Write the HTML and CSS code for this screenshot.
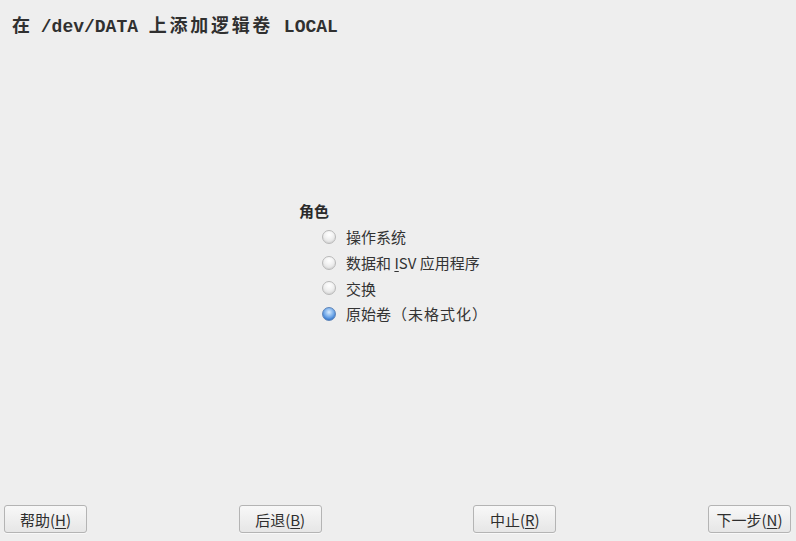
FILE: index.html
```html
<!DOCTYPE html>
<html lang="zh-CN">
<head>
<meta charset="utf-8">
<title>添加逻辑卷</title>
<link rel="stylesheet" href="styles.css">
</head>
<body>
<div class="window">
  <h1 class="title">在 /dev/DATA <span class="cjk">上添加逻辑卷</span> LOCAL</h1>
  <main class="content">
    <fieldset class="group">
      <legend class="group-label">角色</legend>
      <label class="option"><span class="radio"></span><span>操作系统</span></label>
      <label class="option"><span class="radio"></span><span>数据和 <u>I</u>SV 应用程序</span></label>
      <label class="option"><span class="radio"></span><span>交换</span></label>
      <label class="option"><span class="radio checked"></span><span>原始卷<span class="paren">（未格式化）</span></span></label>
    </fieldset>
  </main>
  <footer class="buttons">
    <button class="btn">帮助(<u>H</u>)</button>
    <button class="btn">后退(<u>B</u>)</button>
    <button class="btn">中止(<u>R</u>)</button>
    <button class="btn">下一步(<u>N</u>)</button>
  </footer>
</div>
</body>
</html>
```
FILE: styles.css
```css
html, body {
  margin: 0;
  padding: 0;
  background: #eeeeee;
}
.window {
  width: 796px;
  height: 541px;
  display: flex;
  flex-direction: column;
  font-family: "DejaVu Sans", "Noto Sans CJK SC", sans-serif;
  color: #2e2e2e;
}
.title {
  margin: 0;
  padding: 15px 12px 0 12px;
  height: 28px;
  font-family: "Liberation Mono", "Noto Sans CJK SC", monospace;
  font-size: 18px;
  font-weight: bold;
  line-height: 24px;
  color: #303030;
}
.title .cjk {
  letter-spacing: 2.7px;
}
.content {
  flex: 1;
  display: flex;
  justify-content: center;
  padding-top: 158px;
  padding-right: 8px;
}
.group {
  border: 0;
  margin: 0;
  padding: 0;
  width: 190px;
  display: flex;
  flex-direction: column;
}
.group-label {
  padding: 0;
  font-family: "Noto Sans CJK SC", sans-serif;
  font-weight: bold;
  font-size: 15px;
  line-height: 20px;
  margin-bottom: 3px;
  color: #2a2a2a;
}
.option {
  display: flex;
  align-items: center;
  height: 25.7px;
  padding-left: 23px;
  gap: 10px;
  font-family: "Noto Sans CJK SC", sans-serif;
  font-size: 15px;
  color: #333333;
}
.option .paren {
  margin-left: 1px;
  letter-spacing: 1px;
}
.option u {
  text-decoration-thickness: 1px;
  text-underline-offset: 2px;
}
.radio {
  width: 12px;
  height: 12px;
  border-radius: 50%;
  border: 1px solid #b9b9b9;
  background: radial-gradient(circle at 50% 30%, #ffffff 0%, #f2f2f2 40%, #d6d6d6 100%);
  box-shadow: inset 0 -1px 1px rgba(0,0,0,0.05);
  flex: none;
}
.radio.checked {
  border-color: #5d84b8;
  background: radial-gradient(circle at 50% 35%, #d9ebfd 0%, #8fbdf0 35%, #3f83d8 75%, #2d66b3 100%);
}
.buttons {
  display: flex;
  justify-content: space-between;
  padding: 0 5px 8px 4px;
}
.btn {
  width: 83px;
  height: 28px;
  margin: 0;
  padding: 0;
  border: 1px solid #b4b4b4;
  border-radius: 3px;
  background: linear-gradient(#f8f8f8, #e6e6e6);
  font-family: "Noto Sans CJK SC", sans-serif;
  font-size: 15px;
  color: #2e2e2e;
  box-shadow: 0 1px 0 rgba(255,255,255,0.6);
}
.btn u {
  text-underline-offset: 2px;
}
```
